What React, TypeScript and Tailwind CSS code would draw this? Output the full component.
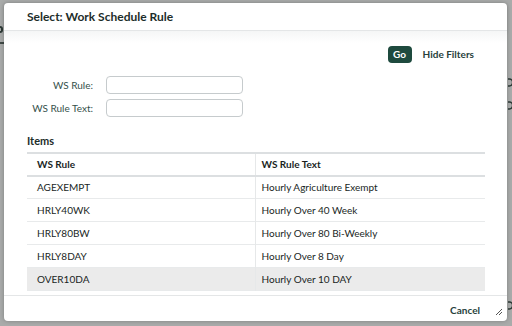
import React from "react"

const rows = [
  { rule: "AGEXEMPT", text: "Hourly Agriculture Exempt" },
  { rule: "HRLY40WK", text: "Hourly Over 40 Week" },
  { rule: "HRLY80BW", text: "Hourly Over 80 Bi-Weekly" },
  { rule: "HRLY8DAY", text: "Hourly Over 8 Day" },
  { rule: "OVER10DA", text: "Hourly Over 10 DAY" },
]

function EdgeGlyph({ top }: { top: string }) {
  // sliver of a page icon peeking out behind the dialog
  return (
    <svg className={`absolute right-0 ${top}`} width="4" height="9" viewBox="0 0 4 9">
      <path d="M0 1 H1.5 A3 3.5 0 0 1 1.5 8 H0" stroke="#2d3a36" strokeWidth="1.3" fill="none" />
    </svg>
  )
}

export default function App() {
  return (
    <div
      className="relative w-[512px] h-[326px] overflow-hidden bg-[#a9abaa] pl-[4px] pt-[3px]"
      style={{ fontFamily: "Lato, 'Noto Sans', Arial, sans-serif" }}
    >
      {/* bits of the page behind the overlay */}
      <div className="absolute left-0 top-[26px] h-[7px] w-[3px] rounded-r-full border-2 border-l-0 border-[#2d3a36]" />
      <div className="absolute left-0 top-[42px] h-[2px] w-[4px] bg-[#3f4a46]" />
      <EdgeGlyph top="top-[78px]" />
      <EdgeGlyph top="top-[101px]" />
      <EdgeGlyph top="top-[301px]" />

      <div className="relative flex h-[318px] w-[503px] flex-col rounded-[4px] bg-white shadow-[0_0_4px_rgba(0,0,0,0.25)]">
        {/* Header */}
        <div className="flex h-[28px] items-center px-[23px] shadow-[0_2px_3px_rgba(0,0,0,0.08)] border-b border-[#e4e6e7]">
          <h1 className="text-[12px] font-bold text-[#1d2d2a]">Select: Work Schedule Rule</h1>
        </div>

        {/* Body */}
        <div className="flex flex-1 flex-col bg-gradient-to-b from-[#f5f6f6] to-white to-[12px] px-[23px]">
          <div className="flex items-center justify-end gap-[11px] pt-[15px] pr-[10px]">
            <button className="h-[17px] w-[24px] rounded-[4px] bg-[#1e4a3e] text-[10px] font-bold text-white">
              Go
            </button>
            <button className="text-[10px] font-bold text-[#27413b]">Hide Filters</button>
          </div>

          <div className="mt-[13px] grid grid-cols-[66px_137px] items-center gap-x-[13px] gap-y-[5px]">
            <label className="text-right text-[10px] text-[#34504a]">WS Rule:</label>
            <input className="h-[18px] rounded-[4px] border border-[#c6cbcd] bg-white" />
            <label className="text-right text-[10px] text-[#34504a]">WS Rule Text:</label>
            <input className="h-[18px] rounded-[4px] border border-[#c6cbcd] bg-white" />
          </div>

          <div className="mt-[16px] text-[11px] font-bold text-[#1d2d2a]">Items</div>

          <table className="mt-[2px] w-[458px] border-collapse text-[10px] text-[#1a1f1e]">
            <thead>
              <tr className="h-[23px] border-y-2 border-[#dcdfe1]">
                <th className="w-[228px] border-r border-[#e6e8e9] pl-[10px] text-left font-bold">WS Rule</th>
                <th className="pl-[6px] text-left font-bold">WS Rule Text</th>
              </tr>
            </thead>
            <tbody>
              {rows.map((r, i) => (
                <tr
                  key={r.rule}
                  className={`h-[23px] border-b border-[#e8eaeb] ${i === rows.length - 1 ? "bg-[#ebebeb]" : ""}`}
                >
                  <td className="border-r border-[#e6e8e9] pl-[10px]">{r.rule}</td>
                  <td className="pl-[6px]">{r.text}</td>
                </tr>
              ))}
            </tbody>
          </table>
        </div>

        {/* Footer */}
        <div className="relative flex h-[26px] items-center justify-end border-t border-[#e4e6e7] pt-[3px] pr-[27px]">
          <button className="text-[10px] font-bold text-[#27413b]">Cancel</button>
          <svg className="absolute bottom-[5px] right-[4px]" width="8" height="8" viewBox="0 0 8 8">
            <path d="M7 1 L1 7 M7 4 L4 7" stroke="#555" strokeWidth="1" />
          </svg>
        </div>
      </div>
    </div>
  )
}
